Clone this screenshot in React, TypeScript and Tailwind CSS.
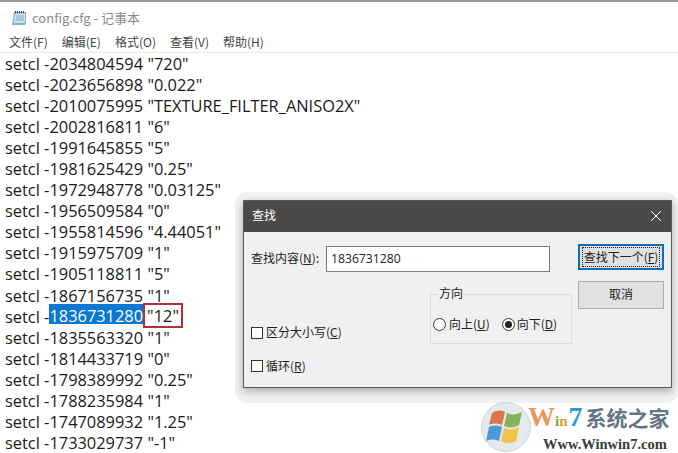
const LINES = [
  ["-2034804594", '"720"'],
  ["-2023656898", '"0.022"'],
  ["-2010075995", '"TEXTURE_FILTER_ANISO2X"'],
  ["-2002816811", '"6"'],
  ["-1991645855", '"5"'],
  ["-1981625429", '"0.25"'],
  ["-1972948778", '"0.03125"'],
  ["-1956509584", '"0"'],
  ["-1955814596", '"4.44051"'],
  ["-1915975709", '"1"'],
  ["-1905118811", '"5"'],
  ["-1867156735", '"1"'],
  ["-1836731280", '"12"'],
  ["-1835563320", '"1"'],
  ["-1814433719", '"0"'],
  ["-1798389992", '"0.25"'],
  ["-1788235984", '"1"'],
  ["-1747089932", '"1.25"'],
  ["-1733029737", '"-1"'],
];

const FONT = "font-['Open_Sans','Noto_Sans_CJK_SC',sans-serif]";
const UI = "font-['Noto_Sans_CJK_SC','Noto_Sans',sans-serif]";

function NotepadIcon() {
  return (
    <svg width="16" height="16" viewBox="0 0 16 16" className="shrink-0">
      <path d="M3 2h12v11l-1 2H1z" fill="#7fb3cf" />
      <path d="M4 3h10v9l-1 1H3z" fill="#cfe3ee" />
      <path d="M4.500 1v2.500M6.500 1v2.500M8.500 1v2.500M10.500 1v2.500M12.500 1v2.500" stroke="#4a4a4a" strokeWidth="1" />
      <path d="M5 6h8M5 8h8M4.500 10h8" stroke="#93a9b6" strokeWidth="1" />
    </svg>
  );
}

function Logo() {
  return (
    <div className="absolute left-[481px] top-[402px] flex items-start">
      <div className="w-[50px] h-[50px] rounded-full bg-[#e4e9ec] border border-[#cfd6da] flex items-center justify-center shrink-0">
        <svg width="40" height="36" viewBox="0 0 40 36">
          <path d="M6 4c5-3 9-3 13-1l-3 13c-4-2-9-2-13 0z" fill="#df7350" />
          <path d="M21 4c4 2 9 2 15-1l-3 13c-5 3-10 3-15 1z" fill="#84b35a" />
          <path d="M3 18c4-2 9-2 13 0l-3 14c-4-2-9-2-13 0z" fill="#4f97d8" />
          <path d="M18 19c5 2 10 2 15-1l-3 14c-5 3-11 3-15 0z" fill="#f2c14a" />
        </svg>
      </div>
      <div className="flex flex-col -ml-[3px] pt-[3px]">
        <div className="flex items-baseline leading-[24px] font-bold font-['Liberation_Serif',serif]">
          <span className="text-[27px] text-[#e8965a]">W</span>
          <span className="text-[15px] text-[#7fa83f]">i</span>
          <span className="text-[15px] text-[#e09a3a]">n</span>
          <span className="text-[28px] ml-[1px] text-[#2f9ad6]">7</span>
          <span className="text-[21px] ml-[3px] text-[#5f7686] font-['Noto_Sans_CJK_SC',sans-serif]">系统之家</span>
        </div>
        <div className="ml-[15px] mt-[3px] text-[14.5px] leading-[16px] font-bold text-[#3a3a3a] font-['Liberation_Serif',serif] whitespace-nowrap">
          Www.Winwin7.com
        </div>
      </div>
    </div>
  );
}

function FindDialog() {
  return (
    <div className="absolute left-[235px] top-[192px] w-[443px] h-[211px] rounded-[12px] bg-[#f1f1f1] pl-[8px] pt-[8px]">
      <div className={`w-[429px] h-[188px] bg-[#f0f0f0] border border-[#5a5a5a] shadow-[0_3px_8px_rgba(0,0,0,0.3)] flex flex-col ${UI}`}>
        <div className="h-[31px] shrink-0 bg-[#4c4a48] flex items-center justify-between pl-[8px] pr-[8px] text-white text-[12px]">
          <span className="-mt-[3px]">查找</span>
          <svg width="14" height="14" viewBox="0 0 14 14" className="-mt-[1px]">
            <path d="M2 2l10 10M12 2L2 12" stroke="#fff" strokeWidth="1" />
          </svg>
        </div>
        <div className="flex-1 flex pl-[7px] pr-[7px] pt-[12px] text-[12px] text-[#222]">
          <div className="w-[321px] flex flex-col">
            <div className="flex items-center h-[26px] mt-[2px]">
              <span className="w-[75px] shrink-0 whitespace-nowrap -mt-[2px]">
                查找内容(<u>N</u>):
              </span>
              <div className={`w-[224px] h-[26px] bg-white border border-[#7a7a7a] flex items-center pl-[4px] text-[12.2px] ${FONT}`}>
                1836731280
              </div>
            </div>
            <div className="flex mt-[22px]">
              <div className="w-[179px] flex flex-col gap-[21px] pt-[33px]">
                <label className="flex items-center gap-[3px] h-[12px]">
                  <span className="w-[12px] h-[12px] bg-white border border-[#333]" />
                  <span className="-mt-[2px]">区分大小写(<u>C</u>)</span>
                </label>
                <label className="flex items-center gap-[3px] h-[12px]">
                  <span className="w-[12px] h-[12px] bg-white border border-[#333]" />
                  <span className="-mt-[1px]">循环(<u>R</u>)</span>
                </label>
              </div>
              <div className="relative w-[142px] h-[50px] border border-[#dcdcdc] flex items-center gap-[12px] pl-[2px] pt-[10px]">
                <span className="absolute left-[7px] top-[-10px] px-[1px] bg-[#f0f0f0] leading-[16px]">方向</span>
                <label className="flex items-center gap-[3px]">
                  <span className="w-[13px] h-[13px] rounded-full bg-white border border-[#333]" />
                  <span>向上(<u>U</u>)</span>
                </label>
                <label className="flex items-center gap-[2px]">
                  <span className="w-[13px] h-[13px] rounded-full bg-white border border-[#333] flex items-center justify-center">
                    <span className="w-[7px] h-[7px] rounded-full bg-[#222]" />
                  </span>
                  <span>向下(<u>D</u>)</span>
                </label>
              </div>
            </div>
          </div>
          <div className="w-[86px] ml-[6px] flex flex-col gap-[11px]">
            <div className="h-[26px] bg-[#e1e1e1] border-2 border-[#0f6cb5] flex items-center justify-center whitespace-nowrap">
              <span className="border border-dotted border-[#222] px-[1px] leading-[18px]">查找下一个(<u>F</u>)</span>
            </div>
            <div className="h-[28px] bg-[#e1e1e1] border border-[#adadad] flex items-center justify-center pb-[3px]">取消</div>
          </div>
        </div>
      </div>
    </div>
  );
}

export default function App() {
  return (
    <div className="relative w-[678px] h-[453px] overflow-hidden bg-white">
      <div className="h-[2px] bg-[#9a9a9a]" />
      <div className={`h-[30px] flex items-center gap-[5px] pl-[11px] pt-[1px] text-[13px] text-[#8a8a8a] ${UI}`}>
        <NotepadIcon />
        <span>config.cfg - 记事本</span>
      </div>
      <div className={`h-[20px] flex items-center gap-[14px] pl-[9px] text-[12px] text-[#444] ${UI}`}>
        <span>文件(F)</span>
        <span>编辑(E)</span>
        <span>格式(O)</span>
        <span>查看(V)</span>
        <span>帮助(H)</span>
      </div>
      <div className="h-[1px] bg-[#e8e8e8]" />
      <div className={`pl-[5px] text-[16.4px] leading-[21.05px] text-[#1a1a1a] whitespace-pre ${FONT}`}>
        {LINES.map(([id, val], i) =>
          id === "-1836731280" ? (
            <div key={i} className="flex h-[21.05px]">
              <span>setcl -</span>
              <span className="bg-[#0a78d2] text-white h-[20px] -mt-[2px] pt-[2px] leading-[19px]">1836731280</span>
              <span className="px-[2px] border-2 border-[#b5302f] leading-[21px] h-[25px] -mt-[3px]">{val}</span>
            </div>
          ) : (
            <div key={i}>
              setcl {id} {val}
            </div>
          )
        )}
      </div>
      <FindDialog />
      <Logo />
    </div>
  );
}
